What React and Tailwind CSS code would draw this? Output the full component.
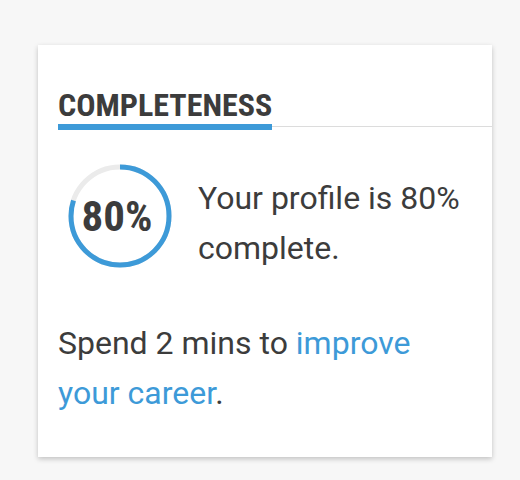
import React from 'react';

const BLUE = '#3d9ad8';

function ProgressRing({ percent }) {
  const r = 49;
  const c = 2 * Math.PI * r;
  return (
    <div className="relative w-[104px] h-[104px] shrink-0">
      <svg width="104" height="104" viewBox="0 0 104 104" className="-rotate-90">
        <circle cx="52" cy="52" r={r} fill="none" stroke="#ebebeb" strokeWidth="5" />
        <circle
          cx="52"
          cy="52"
          r={r}
          fill="none"
          stroke={BLUE}
          strokeWidth="5"
          strokeDasharray={c}
          strokeDashoffset={c * (1 - percent / 100)}
        />
      </svg>
      <div className="absolute inset-0 flex items-center justify-center pr-[6px]">
        <span className="text-[43px] leading-none font-bold text-[#3c3c3c] font-stretch-condensed">
          {percent}%
        </span>
      </div>
    </div>
  );
}

export default function App() {
  return (
    <div
      className="min-h-screen bg-[#f7f7f7] pt-[45px] pl-[38px]"
      style={{ fontFamily: 'Roboto, "Liberation Sans", sans-serif' }}
    >
      <div className="w-[454px] h-[412px] bg-white shadow-[0_2px_5px_rgba(0,0,0,0.22)] pt-[44px] pl-5 text-[#3c3c3c]">
        {/* titulo */}
        <div className="flex items-end">
          <div>
            <h2 className="text-[32px] leading-[32px] font-bold uppercase font-stretch-condensed">
              Completeness
            </h2>
            <div className="h-[6px] mt-[3px]" style={{ backgroundColor: BLUE }}></div>
          </div>
          <div className="flex-1 h-px bg-[#dcdcdc] mb-[3px]"></div>
        </div>

        <div className="flex items-start mt-[34px] pl-[10px] pr-5">
          <ProgressRing percent={80} />
          <p className="ml-[26px] mt-[9px] text-[32px] leading-[50px]">
            Your profile is 80% complete.
          </p>
        </div>

        <p className="mt-[45px] pr-5 text-[32px] leading-[50px]">
          Spend 2 mins to{' '}
          <a href="#" className="text-[#3d9ad8]">
            improve your career
          </a>
          .
        </p>
      </div>
    </div>
  );
}
